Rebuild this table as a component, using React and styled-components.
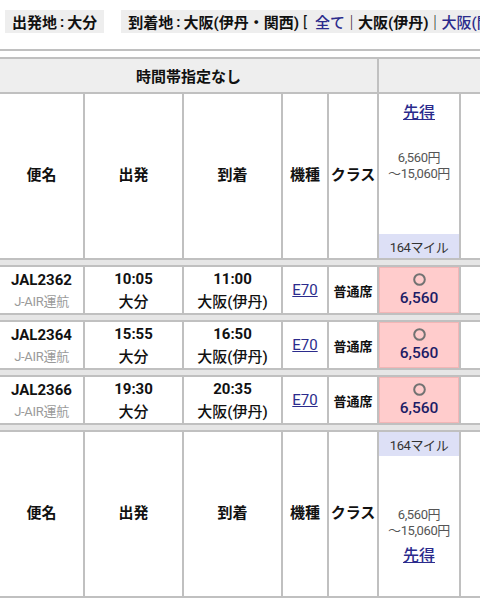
import React from 'react';
import styled, { createGlobalStyle } from 'styled-components';

const LINE = '#c0c0c0';
const BAND = '#e6e6e6';
const LINK = '#2b2b8c';
const COLS = '85px 99px 99px 46px 50px 82px 60px';

const Global = createGlobalStyle`
  html, body { margin: 0; padding: 0; background: #fff; }
  body {
    font-family: Roboto, "Noto Sans CJK JP", sans-serif;
    color: #111;
    overflow: hidden;
  }
`;

const Page = styled.div`
  width: 480px;
  height: 600px;
  overflow: hidden;
`;

const TopBar = styled.div`
  display: flex;
  align-items: center;
  gap: 17px;
  padding: 10px 0 0 5px;
  white-space: nowrap;
`;

const Chip = styled.div`
  flex-shrink: 0;
  display: flex;
  align-items: center;
  height: 23px;
  padding: 0 7px;
  background: #eeeeee;
  font-size: 15px;
  font-weight: 700;
`;

const Colon = styled.span`
  margin: 0 3px;
`;

const Plain = styled.span`
  font-weight: 400;
  margin: 0 ${(p) => p.$r ?? 8}px 0 ${(p) => p.$l ?? 4}px;
`;

const TopLink = styled.a`
  color: ${LINK};
  font-weight: 500;
  text-decoration: none;
`;

const Sep = styled.span`
  font-weight: 500;
  margin: 0 -1px;
`;

const Divider = styled.div`
  margin-top: 16px;
  height: 2px;
  background: ${LINE};
`;

const Table = styled.div`
  margin-top: 6px;
  width: 521px;
  border-top: 2px solid ${LINE};
`;

const Row = styled.div`
  display: grid;
  grid-template-columns: ${COLS};
  height: ${(p) => p.$h}px;
  border-bottom: 2px solid ${LINE};
`;

const Band = styled.div`
  height: 5px;
  background: ${BAND};
  border-bottom: 2px solid ${LINE};
`;

const Cell = styled.div`
  display: flex;
  flex-direction: column;
  align-items: center;
  justify-content: center;
  min-width: 0;
  border-right: ${(p) => (p.$last ? 'none' : `2px solid ${LINE}`)};
  background: ${(p) => p.$bg || 'transparent'};
  grid-column: ${(p) => p.$span || 'auto'};
  box-shadow: ${(p) => (p.$ring ? `inset 0 0 0 1px ${p.$ring}` : 'none')};
`;

const TitleText = styled.div`
  font-size: 15px;
  font-weight: 700;
`;

const HeadLabel = styled.div`
  font-size: 15px;
  font-weight: 700;
  line-height: 20px;
  margin-top: -3px;
`;

const PriceHead = styled.div`
  display: flex;
  flex-direction: column;
  align-items: center;
  height: 100%;
  border-right: 2px solid ${LINE};
`;

const Tokutoku = styled.a`
  display: block;
  font-size: 16px;
  font-weight: 500;
  line-height: 22px;
  color: ${LINK};
  text-decoration: underline;
  margin-top: ${(p) => p.$mt || 0}px;
`;

const Fare = styled.div`
  font-size: 13px;
  line-height: 16px;
  color: #555;
  text-align: center;
  margin-top: ${(p) => p.$mt || 0}px;
  letter-spacing: -0.4px;
`;

const Miles = styled.div`
  align-self: stretch;
  height: 24px;
  display: flex;
  align-items: center;
  justify-content: center;
  background: #dde0f6;
  font-size: 13px;
  color: #333;
  margin-top: ${(p) => (p.$auto ? 'auto' : '0')};
  letter-spacing: -0.4px;
`;

const FlightNo = styled.div`
  font-size: 15px;
  font-weight: 700;
  line-height: 22px;
`;

const Operator = styled.div`
  font-size: 13px;
  line-height: 20px;
  color: #9a9a9a;
  margin-top: 1px;
  letter-spacing: -0.3px;
`;

const Time = styled.div`
  font-size: 15px;
  font-weight: 700;
  line-height: 22px;
`;

const Place = styled.div`
  font-size: 15px;
  font-weight: 500;
  line-height: 22px;
  margin-top: 1px;
`;

const TypeLink = styled.a`
  font-size: 15px;
  color: ${LINK};
  text-decoration: underline;
`;

const SeatClass = styled.div`
  font-size: 13px;
  font-weight: 700;
`;

const Price = styled.div`
  font-size: 15.5px;
  font-weight: 500;
  line-height: 18px;
  color: #1c1c66;
  margin-top: 3px;
`;

const Circle = () => (
  <svg width="13" height="13" viewBox="0 0 13 13">
    <circle cx="6.5" cy="6.5" r="5.3" fill="none" stroke="#727272" strokeWidth="2" />
  </svg>
);

const flights = [
  { no: 'JAL2362', dep: '10:05', arr: '11:00' },
  { no: 'JAL2364', dep: '15:55', arr: '16:50' },
  { no: 'JAL2366', dep: '19:30', arr: '20:35' },
];

const labels = ['便名', '出発', '到着', '機種', 'クラス'];

const HeaderRow = ({ bottom }) => (
  <Row $h={164}>
    {labels.map((l) => (
      <Cell key={l}>
        <HeadLabel>{l}</HeadLabel>
      </Cell>
    ))}
    {bottom ? (
      <PriceHead>
        <Miles>164マイル</Miles>
        <Fare $mt={51}>
          6,560円
          <br />
          ～15,060円
        </Fare>
        <Tokutoku href="#" $mt={6}>先得</Tokutoku>
      </PriceHead>
    ) : (
      <PriceHead>
        <Tokutoku href="#" $mt={8}>先得</Tokutoku>
        <Fare $mt={26}>
          6,560円
          <br />
          ～15,060円
        </Fare>
        <Miles $auto>164マイル</Miles>
      </PriceHead>
    )}
    <Cell $last />
  </Row>
);

export default function App() {
  return (
    <Page>
      <Global />
      <TopBar>
        <Chip>
          出発地<Colon>:</Colon>大分
        </Chip>
        <Chip>
          到着地<Colon>:</Colon>大阪(伊丹・関西)
          <Plain>[</Plain>
          <TopLink href="#">全て</TopLink>
          <Sep>｜</Sep>
          大阪(伊丹)
          <Sep>｜</Sep>
          <TopLink href="#">大阪(関西)</TopLink>
          <Plain $l={2} $r={0}>]</Plain>
        </Chip>
      </TopBar>
      <Divider />
      <Table>
        <Row $h={33}>
          <Cell $span="1 / 6" $bg="#eeeeee">
            <TitleText>時間帯指定なし</TitleText>
          </Cell>
          <Cell $span="6 / 8" $bg="#eeeeee" $last />
        </Row>
        <HeaderRow />
        {flights.map((f) => (
          <React.Fragment key={f.no}>
            <Band />
            <Row $h={46}>
              <Cell>
                <FlightNo>{f.no}</FlightNo>
                <Operator>J-AIR運航</Operator>
              </Cell>
              <Cell>
                <Time>{f.dep}</Time>
                <Place>大分</Place>
              </Cell>
              <Cell>
                <Time>{f.arr}</Time>
                <Place>大阪(伊丹)</Place>
              </Cell>
              <Cell>
                <TypeLink href="#">E70</TypeLink>
              </Cell>
              <Cell>
                <SeatClass>普通席</SeatClass>
              </Cell>
              <Cell $bg="#ffcccc" $ring="#f2b6b6">
                <Circle />
                <Price>6,560</Price>
              </Cell>
              <Cell $last />
            </Row>
          </React.Fragment>
        ))}
        <Band />
        <HeaderRow bottom />
      </Table>
    </Page>
  );
}
